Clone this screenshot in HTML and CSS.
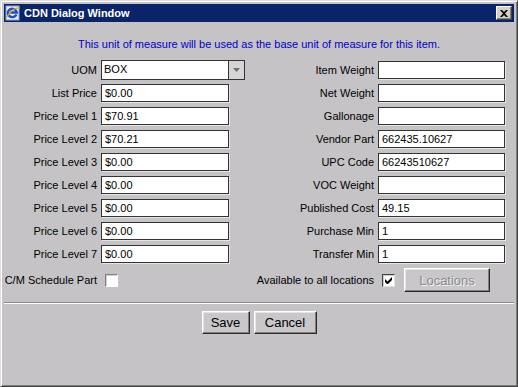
FILE: index.html
```html
<!DOCTYPE html>
<html lang="en">

<head>
    <meta charset="UTF-8">
    <title>CDN Dialog Window</title>
    <link rel="stylesheet" href="styles.css">
</head>

<body>
    <div class="window">
        <div class="titlebar">
            <svg class="app-icon" width="16" height="16" viewBox="0 0 16 16">
                <rect x="1" y="1" width="13" height="14" fill="#e8eef8" stroke="#8aa4c8" stroke-width="1"/>
                <path d="M11.5 9.5 A4.5 4.2 0 1 1 11.8 7.5 L5 7.5" fill="none" stroke="#1652c4" stroke-width="2.4"/>
                <path d="M2 12 Q8 2 15 3" fill="none" stroke="#e8a020" stroke-width="1.2"/>
            </svg>
            <span class="title">CDN Dialog Window</span>
            <div class="close-btn">
                <svg width="8" height="7" viewBox="0 0 8 7">
                    <path d="M0 0h2l2 2 2-2h2L5 3.5 8 7H6L4 5 2 7H0l3-3.5z" fill="#000"/>
                </svg>
            </div>
        </div>

        <div class="content">
            <p class="message">This unit of measure will be used as the base unit of measure for this item.</p>

            <div class="fields">
                <label>UOM</label>
                <div class="select">
                    <span class="select-value">BOX</span>
                    <span class="select-arrow"><svg width="7" height="4" viewBox="0 0 7 4"><path d="M0 0h7L3.5 4z" fill="#707070"/></svg></span>
                </div>
                <label>Item Weight</label>
                <input type="text" class="field wide" value="">

                <label>List Price</label>
                <input type="text" class="field" value="$0.00">
                <label>Net Weight</label>
                <input type="text" class="field wide" value="">

                <label>Price Level 1</label>
                <input type="text" class="field" value="$70.91">
                <label>Gallonage</label>
                <input type="text" class="field wide" value="">

                <label>Price Level 2</label>
                <input type="text" class="field" value="$70.21">
                <label>Vendor Part</label>
                <input type="text" class="field wide" value="662435.10627">

                <label>Price Level 3</label>
                <input type="text" class="field" value="$0.00">
                <label>UPC Code</label>
                <input type="text" class="field wide" value="66243510627">

                <label>Price Level 4</label>
                <input type="text" class="field" value="$0.00">
                <label>VOC Weight</label>
                <input type="text" class="field wide" value="">

                <label>Price Level 5</label>
                <input type="text" class="field" value="$0.00">
                <label>Published Cost</label>
                <input type="text" class="field wide" value="49.15">

                <label>Price Level 6</label>
                <input type="text" class="field" value="$0.00">
                <label>Purchase Min</label>
                <input type="text" class="field wide" value="1">

                <label>Price Level 7</label>
                <input type="text" class="field" value="$0.00">
                <label>Transfer Min</label>
                <input type="text" class="field wide" value="1">
            </div>

            <div class="checks">
                <label>C/M Schedule Part</label>
                <span class="checkbox"></span>
                <label>Available to all locations</label>
                <div class="check-group">
                    <span class="checkbox checked">
                        <svg width="7" height="7" viewBox="0 0 7 7"><path d="M0 2v3l2 2h1l4-4V0L2.5 4.5z" fill="#000"/></svg>
                    </span>
                    <button class="btn locations" disabled>Locations</button>
                </div>
            </div>

            <div class="separator"></div>

            <div class="actions">
                <button class="btn save">Save</button>
                <button class="btn cancel">Cancel</button>
            </div>
        </div>
    </div>
</body>

</html>
```

FILE: styles.css
```css
body {
    margin: 0;
    font-family: "Liberation Sans", Arial, sans-serif;
    font-size: 11px;
    color: #000;
}

.window {
    width: 518px;
    height: 387px;
    box-sizing: border-box;
    border: 1px solid;
    border-color: #dedede #404040 #404040 #dedede;
    box-shadow: inset 1px 1px #fff, inset -1px -1px #808080;
    padding: 3px;
    background-color: #c5c3c6;
    display: flex;
    flex-direction: column;
}

.titlebar {
    height: 18px;
    flex: 0 0 auto;
    background-color: #0a246a;
    color: #fff;
    display: flex;
    align-items: center;
    padding: 0 2px 0 1px;
    gap: 3px;
}

.title {
    font-weight: bold;
    font-size: 11px;
}

.close-btn {
    margin-left: auto;
    width: 16px;
    height: 14px;
    box-sizing: border-box;
    background-color: #d4d0c8;
    border: 1px solid;
    border-color: #fff #404040 #404040 #fff;
    box-shadow: inset -1px -1px #808080;
    display: flex;
    align-items: center;
    justify-content: center;
}

.content {
    padding-top: 15px;
}

.message {
    margin: 0;
    line-height: 14px;
    text-align: center;
    color: #0000cc;
}

/* label / input grid, two columns of pairs */
.fields,
.checks {
    display: grid;
    grid-template-columns: 93px 144px 125px 127px;
    column-gap: 4px;
}

.fields {
    margin-top: 10px;
    grid-auto-rows: 18px;
    row-gap: 5px;
}

.fields label,
.checks label {
    text-align: right;
    white-space: nowrap;
    line-height: 18px;
}

.field {
    width: 128px;
    height: 18px;
    box-sizing: border-box;
    margin: 0;
    padding: 0 0 0 3px;
    border: 1px solid #333;
    box-shadow: 1px 1px 0 #e6e6e6;
    background-color: #fff;
    font-family: inherit;
    font-size: 11px;
    color: #000;
    outline: none;
}

.field.wide {
    width: 127px;
}

.select {
    width: 144px;
    height: 20px;
    box-sizing: border-box;
    align-self: center;
    border: 1px solid #333;
    background-color: #fff;
    display: flex;
}

.select-value {
    flex: 1;
    padding-left: 2px;
    line-height: 17px;
}

.select-arrow {
    width: 15px;
    border-left: 1px solid #333;
    background-color: #d6d4d7;
    display: flex;
    align-items: center;
    justify-content: center;
}

.checks {
    margin-top: 5px;
    height: 24px;
    align-items: center;
}

.checkbox {
    width: 13px;
    height: 13px;
    box-sizing: border-box;
    margin-left: 4px;
    background-color: #fff;
    border: 1px solid;
    border-color: #808080 #fff #fff #808080;
    box-shadow: inset 1px 1px #d0d0d0;
    display: flex;
    align-items: center;
    justify-content: center;
}

.checkbox.checked {
    border-color: #404040 #e0e0e0 #e0e0e0 #404040;
}

.check-group {
    display: flex;
    align-items: center;
}

.btn {
    height: 23px;
    box-sizing: border-box;
    margin: 0;
    padding: 0;
    background-color: #c9c7ca;
    border: 1px solid;
    border-color: #fff #2a2a2a #2a2a2a #fff;
    box-shadow: inset -1px -1px #808080, inset 1px 1px #e4e4e4;
    font-family: inherit;
    font-size: 13px;
    color: #000;
}

.locations {
    width: 86px;
    height: 24px;
    margin-left: 9px;
    color: #8c8a8d;
    text-shadow: 1px 1px #f4f4f4;
}

.separator {
    margin-top: 10px;
    height: 0;
    border-top: 1px solid #8a888b;
    border-bottom: 1px solid #fff;
}

.actions {
    margin-top: 7px;
    display: flex;
    justify-content: center;
    gap: 4px;
}

.save {
    width: 48px;
}

.cancel {
    width: 63px;
}
```
